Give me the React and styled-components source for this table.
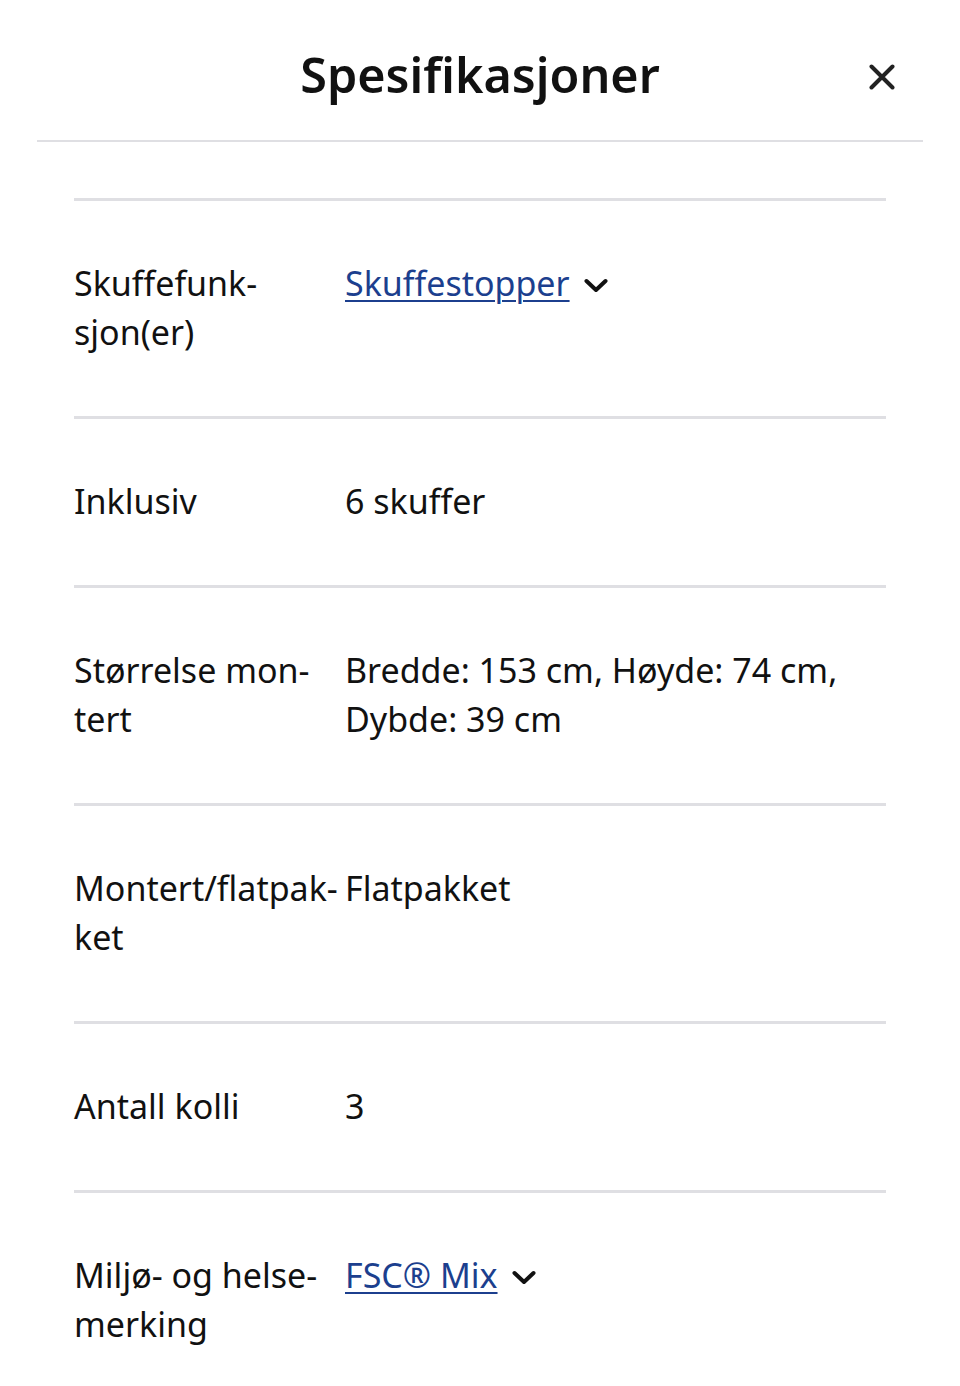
import React from "react";
import styled, { createGlobalStyle } from "styled-components";

const Global = createGlobalStyle`
  html, body { margin: 0; padding: 0; background: #fff; }
  body { font-family: "Noto Sans", "Open Sans", sans-serif; color: #111; }
`;

const Page = styled.div`
  width: 960px;
  min-height: 1386px;
  background: #fff;
`;

const Header = styled.header`
  position: relative;
  margin: 0 37px;
  height: 140px;
  border-bottom: 2px solid #dfdfe3;
  display: flex;
  align-items: center;
  justify-content: center;
`;

const Title = styled.h1`
  margin: 0;
  font-size: 48.5px;
  font-weight: 600;
  line-height: 1;
  padding-top: 8px;
  letter-spacing: 0;
`;

const CloseButton = styled.button`
  position: absolute;
  right: 22px;
  top: 58px;
  width: 38px;
  height: 38px;
  border: 0;
  background: none;
  padding: 0;
  display: flex;
  align-items: center;
  justify-content: center;
  cursor: pointer;
`;

const Table = styled.div`
  margin: 56px 74px 0;
`;

const Row = styled.div`
  display: grid;
  grid-template-columns: 271px 1fr;
  border-top: 3px solid #dfdfe3;
  padding: 58px 0 59px;
  font-size: 34px;
  line-height: 49px;
`;

const Label = styled.div`
  white-space: nowrap;
`;

const Value = styled.div`
  display: flex;
  align-items: flex-start;
`;

const Link = styled.a`
  color: #1c3f8e;
  text-decoration: underline;
  text-decoration-thickness: 2px;
  text-underline-offset: 4px;
`;

const Chevron = styled.span`
  display: inline-flex;
  margin-left: 14px;
  margin-top: 19px;
`;

const ChevronIcon = () => (
  <Chevron>
    <svg width="24" height="16" viewBox="0 0 24 16" fill="none">
      <path d="M2.5 3 L12 12 L21.5 3" stroke="#111" strokeWidth="4" strokeLinecap="round" strokeLinejoin="round" />
    </svg>
  </Chevron>
);

const rows = [
  { label: ["Skuffefunk-", "sjon(er)"], value: "Skuffestopper", link: true },
  { label: ["Inklusiv"], value: "6 skuffer" },
  { label: ["Størrelse mon-", "tert"], value: ["Bredde: 153 cm, Høyde: 74 cm,", "Dybde: 39 cm"] },
  { label: ["Montert/flatpak-", "ket"], value: "Flatpakket" },
  { label: ["Antall kolli"], value: "3" },
  { label: ["Miljø- og helse-", "merking"], value: "FSC® Mix", link: true },
];

export default function App() {
  return (
    <Page>
      <Global />
      <Header>
        <Title>Spesifikasjoner</Title>
        <CloseButton aria-label="Lukk">
          <svg width="26" height="26" viewBox="0 0 26 26">
            <path d="M2.5 2.5 L23.5 23.5 M23.5 2.5 L2.5 23.5" stroke="#222" strokeWidth="4" strokeLinecap="round" />
          </svg>
        </CloseButton>
      </Header>
      <Table>
        {rows.map((r, i) => (
          <Row key={i}>
            <Label>
              {r.label.map((l, j) => (
                <div key={j}>{l}</div>
              ))}
            </Label>
            <Value>
              {r.link ? (
                <>
                  <Link href="#">{r.value}</Link>
                  <ChevronIcon />
                </>
              ) : Array.isArray(r.value) ? (
                <div>
                  {r.value.map((v, j) => (
                    <div key={j}>{v}</div>
                  ))}
                </div>
              ) : (
                <div>{r.value}</div>
              )}
            </Value>
          </Row>
        ))}
      </Table>
    </Page>
  );
}
